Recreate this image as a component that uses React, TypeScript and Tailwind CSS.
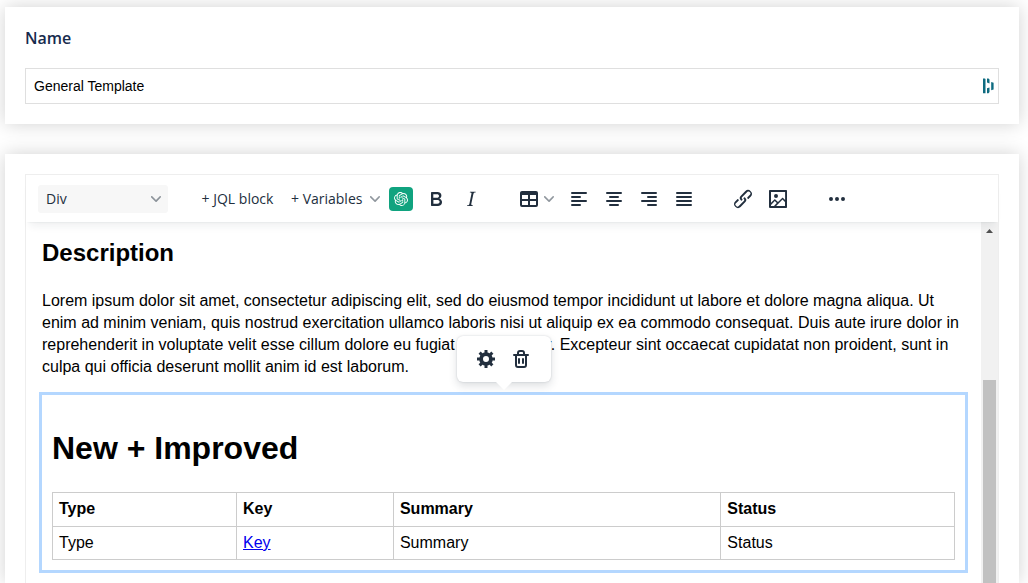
import type { ReactNode } from 'react'
import { SiOpenai } from 'react-icons/si'

const icons = {
  bold: 'M7.8 19c-.3 0-.5 0-.6-.2l-.2-.5V5.7c0-.2 0-.4.2-.5l.6-.2h5c1.5 0 2.7.3 3.5 1 .7.6 1.1 1.4 1.1 2.5a3 3 0 01-.6 1.9c-.4.6-1 1-1.6 1.2.4.1.9.3 1.3.6s.8.7 1 1.2c.4.4.5 1 .5 1.6 0 1.3-.4 2.3-1.3 3-.8.7-2.1 1-3.8 1H7.8zm5-8.3c.6 0 1.2-.1 1.6-.5.4-.3.6-.7.6-1.3 0-1.1-.8-1.7-2.3-1.7H9.3v3.5h3.4zm.5 6c.7 0 1.3-.1 1.7-.4.4-.4.6-.9.6-1.5s-.2-1-.7-1.4c-.4-.3-1-.4-2-.4H9.4v3.8h4z',
  italic: 'M16.7 4.7l-.1.9h-.3c-.6 0-1 0-1.4.3-.3.3-.4.6-.5 1.1l-2.1 9.8v.6c0 .5.4.8 1.4.8h.2l-.2.8H8l.2-.8h.2c1.1 0 1.8-.5 2-1.5l2-9.8.1-.5c0-.6-.4-.8-1.4-.8h-.3l.2-.9h5.8z',
  table: 'M19 4a2 2 0 012 2v12a2 2 0 01-2 2H5a2 2 0 01-2-2V6c0-1.1.9-2 2-2h14zM5 14v4h6v-4H5zm14 0h-6v4h6v-4zm0-6h-6v4h6V8zM5 12h6V8H5v4z',
  alignLeft: 'M5 5h14a1 1 0 010 2H5a1 1 0 110-2zm0 4h8a1 1 0 010 2H5a1 1 0 110-2zm0 4h14a1 1 0 010 2H5a1 1 0 010-2zm0 4h8a1 1 0 010 2H5a1 1 0 010-2z',
  alignCenter: 'M5 5h14a1 1 0 010 2H5a1 1 0 110-2zm3 4h8a1 1 0 010 2H8a1 1 0 110-2zm-3 4h14a1 1 0 010 2H5a1 1 0 010-2zm3 4h8a1 1 0 010 2H8a1 1 0 010-2z',
  alignRight: 'M5 5h14a1 1 0 010 2H5a1 1 0 110-2zm6 4h8a1 1 0 010 2h-8a1 1 0 110-2zm-6 4h14a1 1 0 010 2H5a1 1 0 010-2zm6 4h8a1 1 0 010 2h-8a1 1 0 010-2z',
  alignJustify: 'M5 5h14a1 1 0 010 2H5a1 1 0 110-2zm0 4h14a1 1 0 010 2H5a1 1 0 110-2zm0 4h14a1 1 0 010 2H5a1 1 0 010-2zm0 4h14a1 1 0 010 2H5a1 1 0 010-2z',
  link: 'M6.2 12.3a1 1 0 011.4 1.4l-2.1 2a2 2 0 102.7 2.8l4.8-4.8a1 1 0 000-1.4 1 1 0 111.4-1.3 2.9 2.9 0 010 4L9.6 20a3.9 3.9 0 01-5.5-5.5l2-2zm11.6-.6a1 1 0 01-1.4-1.4l2-2a2 2 0 10-2.6-2.8L11 10.3a1 1 0 000 1.4A1 1 0 119.6 13a2.9 2.9 0 010-4L14.4 4a3.9 3.9 0 015.5 5.5l-2 2z',
  image: 'M5 15.7l3.3-3.2c.3-.3.7-.3 1 0L12 15l4.1-4c.3-.4.8-.4 1 0l2 1.9V5H5v10.7zM5 18V19h3l2.8-2.9-2-2L5 17.9zm14-3l-2.5-2.4-6.4 6.5H19v-4zM4 3h16c.6 0 1 .4 1 1v16c0 .6-.4 1-1 1H4a1 1 0 01-1-1V4c0-.6.4-1 1-1zm6 8a2 2 0 100-4 2 2 0 000 4z',
  more: 'M6 10a2 2 0 100 4 2 2 0 000-4zm12 0a2 2 0 100 4 2 2 0 000-4zm-6 0a2 2 0 100 4 2 2 0 000-4z',
  trash: 'M16 7h3a1 1 0 010 2h-1v9a3 3 0 01-3 3H9a3 3 0 01-3-3V9H5a1 1 0 110-2h3V6a3 3 0 013-3h2a3 3 0 013 3v1zm-2 0V6c0-.6-.4-1-1-1h-2a1 1 0 00-1 1v1h4zm2 2H8v9c0 .6.4 1 1 1h6c.6 0 1-.4 1-1V9zm-7 3a1 1 0 012 0v4a1 1 0 01-2 0v-4zm4 0a1 1 0 012 0v4a1 1 0 01-2 0v-4z',
}

function Icon({ name }: { name: keyof typeof icons }) {
  return <svg className="size-6 shrink-0" viewBox="0 0 24 24" fill="currentColor" fillRule="evenodd"><path d={icons[name]} /></svg>
}

function Chevron() {
  return <svg className="size-[10px] shrink-0 fill-[#222f3e]/50" viewBox="0 0 10 10">
    <path d="M8.7 2.2c.3-.3.8-.3 1 0 .4.4.4.9 0 1.2L5.7 7.8c-.3.3-.9.3-1.2 0L.2 3.4a.8.8 0 010-1.2c.3-.3.8-.3 1.1 0L5 6l3.7-3.8z" />
  </svg>
}

function Gear() {
  return <svg className="size-6" viewBox="0 0 24 24" fill="none" stroke="currentColor">
    <circle cx="12" cy="12" r="4.9" strokeWidth="3.8" />
    {[0, 45, 90, 135, 180, 225, 270, 315].map(angle => <path key={angle} d="M12 3v3.4" strokeWidth="3" transform={`rotate(${angle} 12 12)`} />)}
  </svg>
}

function ToolButton({ label, children }: { label: string; children: ReactNode }) {
  return <button type="button" aria-label={label} className="flex h-[34px] w-[35px] items-center justify-center">{children}</button>
}

function Toolbar() {
  return <div className="relative z-10 flex h-[47px] items-center gap-6 bg-white pl-3 font-['Open_Sans',sans-serif] text-sm text-[#222f3e] shadow-[0_2px_2px_-2px_rgba(34,47,62,0.1),0_8px_8px_-4px_rgba(34,47,62,0.07)]">
    <div className="relative flex items-center">
      <select aria-label="Block format" className="h-7 w-[130px] appearance-none rounded-[3px] bg-[#f7f7f7] px-2 pt-px">
        <option>Div</option>
        <option>Paragraph</option>
      </select>
      <span className="pointer-events-none absolute right-[7px]"><Chevron /></span>
    </div>
    <div className="flex items-center">
      <button type="button" className="h-[34px] w-[91px] pt-px whitespace-nowrap">+ JQL block</button>
      <button type="button" className="flex h-[34px] w-[100px] items-center justify-between pr-[3px] pl-2 whitespace-nowrap"><span className="pt-px">+ Variables</span> <Chevron /></button>
      <ToolButton label="AI assistant">
        <span className="flex size-6 items-center justify-center rounded bg-[#10a37f] text-white"><SiOpenai className="size-[14px]" /></span>
      </ToolButton>
      <ToolButton label="Bold"><Icon name="bold" /></ToolButton>
      <ToolButton label="Italic"><Icon name="italic" /></ToolButton>
    </div>
    <div className="flex items-center">
      <button type="button" aria-label="Table" className="flex h-[34px] w-[49px] items-center gap-[3px] pl-[5px]"><Icon name="table" /><Chevron /></button>
      <ToolButton label="Align left"><Icon name="alignLeft" /></ToolButton>
      <ToolButton label="Align center"><Icon name="alignCenter" /></ToolButton>
      <ToolButton label="Align right"><Icon name="alignRight" /></ToolButton>
      <ToolButton label="Justify"><Icon name="alignJustify" /></ToolButton>
    </div>
    <div className="flex items-center">
      <ToolButton label="Insert link"><Icon name="link" /></ToolButton>
      <ToolButton label="Insert image"><Icon name="image" /></ToolButton>
    </div>
    <ToolButton label="More"><Icon name="more" /></ToolButton>
  </div>
}

function BlockMenu() {
  return <div className="absolute bottom-full left-1/2 mb-[13px] flex -translate-x-1/2 rounded-md bg-white px-3 py-[6px] text-[#222f3e] shadow-[0_0_2px_0_rgba(34,47,62,0.2),0_4px_8px_0_rgba(34,47,62,0.15)]">
    <ToolButton label="Block settings"><Gear /></ToolButton>
    <ToolButton label="Remove block"><Icon name="trash" /></ToolButton>
    <svg className="absolute top-full left-1/2 h-2 w-4 -translate-x-1/2" viewBox="0 0 16 8"><path d="M0 0h16L8 8z" fill="#fff" /></svg>
  </div>
}

function IssueBlock() {
  return <section className="relative px-[10px] pt-[31px] pb-[10px] outline-[3px] outline-[#b4d7ff] outline-solid">
    <BlockMenu />
    <h1 className="mb-[21px] text-[32px] leading-[45px] font-bold">New + Improved</h1>
    <table className="w-full table-fixed border-collapse text-left">
      <colgroup>
        <col className="w-[20.4%]" />
        <col className="w-[17.4%]" />
        <col className="w-[36.3%]" />
        <col className="w-[25.9%]" />
      </colgroup>
      <thead>
        <tr>
          {['Type', 'Key', 'Summary', 'Status'].map(title => <th key={title} className="h-[34px] border border-[#ccc] px-[6px] pb-[2px] font-bold">{title}</th>)}
        </tr>
      </thead>
      <tbody>
        <tr>
          <td className="h-[33px] border border-[#ccc] px-[6px]">Type</td>
          <td className="h-[33px] border border-[#ccc] px-[6px]"><a href="#key" className="text-[#0000ee] underline">Key</a></td>
          <td className="h-[33px] border border-[#ccc] px-[6px]">Summary</td>
          <td className="h-[33px] border border-[#ccc] px-[6px]">Status</td>
        </tr>
      </tbody>
    </table>
  </section>
}

function Scrollbar() {
  return <div className="flex w-[17px] shrink-0 flex-col items-center bg-[#f1f1f1]">
    <svg className="h-[17px] w-full shrink-0" viewBox="0 0 17 17"><path d="M5 11l3.5-4 3.5 4z" fill="#505050" /></svg>
    <div className="mt-[141px] w-[13px] flex-1 bg-[#c1c1c1]" />
  </div>
}

export default function App() {
  return <main className="flex h-screen flex-col gap-[30px] overflow-hidden bg-white pt-[7px] pr-[9px] pl-[5px] font-['Liberation_Sans',sans-serif] text-black">
    <section className="shrink-0 bg-white p-5 shadow-[0_0_18px_rgba(0,0,0,0.18)]">
      <label htmlFor="name" className="block font-['Open_Sans',sans-serif] text-base leading-[22px] font-semibold text-[#172b4d]">Name</label>
      <div className="relative mt-[19px] flex items-center">
        <input id="name" defaultValue="General Template" className="h-9 w-full border border-[#dfdfdf] px-2 text-sm" />
        <svg className="absolute right-1 h-4 w-3 fill-[#0e6b80]" viewBox="0 0 12 16">
          <path d="M0 .5h1.8l.7.6v14.1H0zM4 .5h1.5l1 1v3.9L4 4.6zM4 10.2l2.5-.7v4.5l-1 1.2H4zM8.2 4l2.4.8v6.6l-2.4.8z" />
        </svg>
      </div>
    </section>

    <section className="flex min-h-0 flex-1 flex-col bg-white px-5 pt-5 shadow-[0_0_18px_rgba(0,0,0,0.18)]">
      <div className="flex min-h-0 flex-1 flex-col border border-b-0 border-[#eee]">
        <Toolbar />
        <div className="flex min-h-0 flex-1">
          <div className="min-w-0 flex-1 overflow-hidden px-4 pt-[14px] leading-[22px]">
            <h2 className="mb-5 text-2xl leading-[34px] font-bold">Description</h2>
            <p className="mb-[17px]">Lorem ipsum dolor sit amet, consectetur adipiscing elit, sed do eiusmod tempor incididunt ut labore et dolore magna aliqua. Ut enim ad minim veniam, quis nostrud exercitation ullamco laboris nisi ut aliquip ex ea commodo consequat. Duis aute irure dolor in reprehenderit in voluptate velit esse cillum dolore eu fugiat nulla pariatur. Excepteur sint occaecat cupidatat non proident, sunt in culpa qui officia deserunt mollit anim id est laborum.</p>
            <IssueBlock />
          </div>
          <Scrollbar />
        </div>
      </div>
    </section>
  </main>
}
